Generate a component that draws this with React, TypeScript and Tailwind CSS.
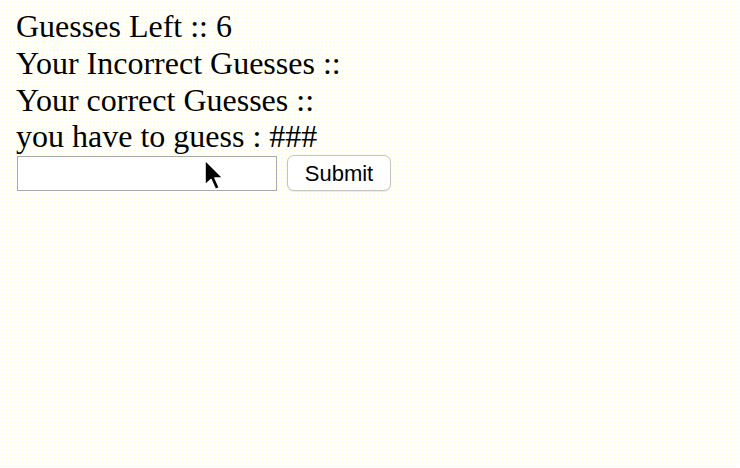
import { useState } from 'react';

export default function App() {
  const [guess, setGuess] = useState('');

  return (
    <div className="relative min-h-screen bg-white bg-[radial-gradient(circle,#fcfcb4_0.6px,transparent_0.8px)] bg-size-[4px_4px] pt-2 pl-4 text-black">
      <div className="font-['Liberation_Serif',serif] text-[32px] leading-[36.8px]">
        <div>Guesses Left :: 6</div>
        <div>Your Incorrect Guesses ::</div>
        <div>Your correct Guesses ::</div>
        <div>you have to guess : ###</div>
      </div>
      <form
        className="flex items-center gap-[10px] pl-px"
        onSubmit={(e) => {
          e.preventDefault();
          setGuess('');
        }}
      >
        <input
          value={guess}
          onChange={(e) => setGuess(e.target.value)}
          className="h-[35px] w-[260px] border border-[#a9a9a9] bg-white px-1 font-['Liberation_Sans',sans-serif] text-[20px] outline-none"
        />
        <button
          type="submit"
          className="flex h-[36px] w-[104px] items-center justify-center rounded-[7px] border border-[#c4c4bc] bg-white font-['Liberation_Sans',sans-serif] text-[22px] shadow-[0_1px_1px_rgba(0,0,0,0.08)]"
        >
          Submit
        </button>
      </form>

      {/* mouse pointer over the input */}
      <svg
        className="pointer-events-none absolute left-[202px] top-[157px]"
        width="24"
        height="36"
        viewBox="0 0 24 36"
      >
        <path
          d="M3 3 L3 28 L9 22.5 L13.5 32.5 L17.5 30.8 L13 21 L21 21 Z"
          fill="#000"
          stroke="#fff"
          strokeWidth="1.6"
          strokeLinejoin="round"
        />
      </svg>
    </div>
  );
}
